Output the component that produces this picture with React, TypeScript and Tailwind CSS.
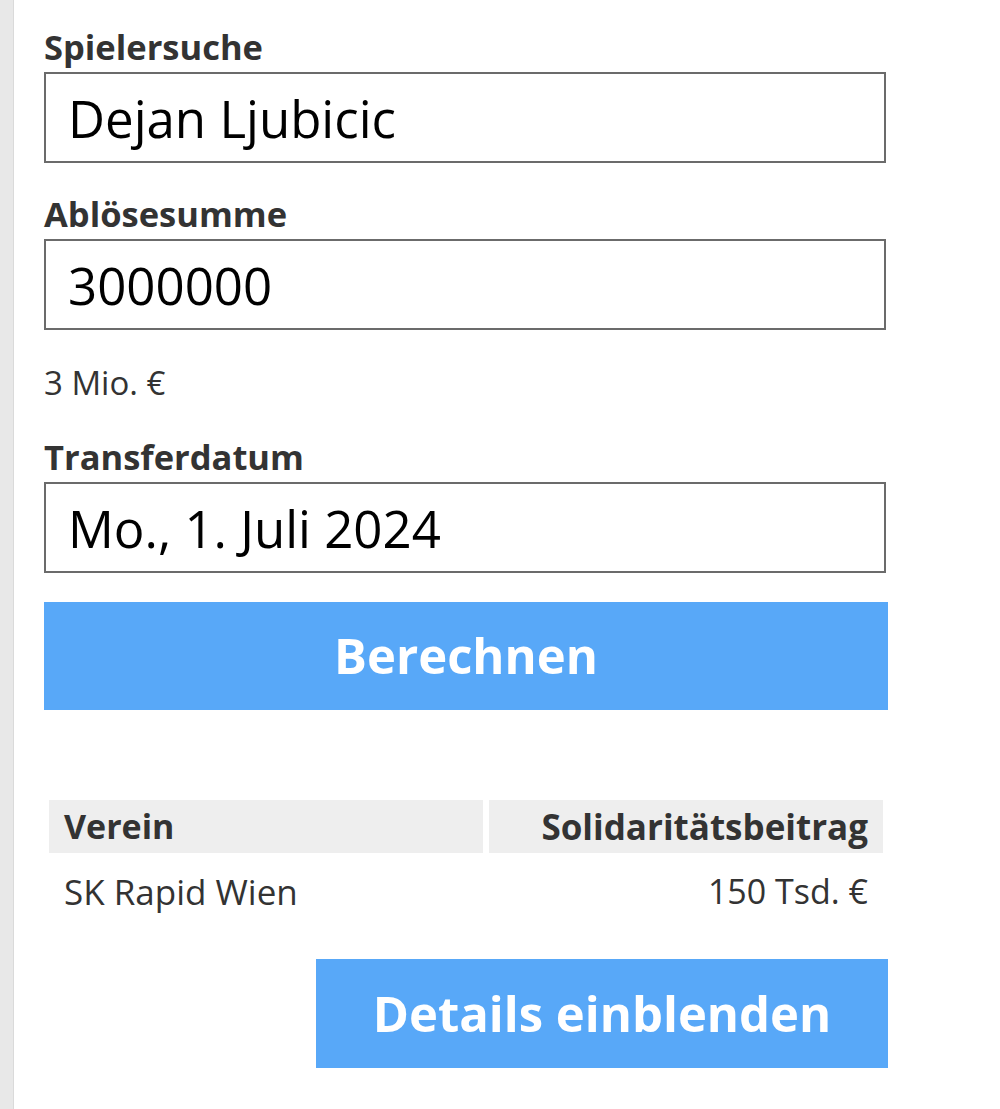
import { useState } from 'react';

const fieldClass =
    "block w-[842px] h-[91px] border-2 border-[#6b6b6b] bg-white pl-[22px] text-[51px] text-black outline-none font-['Open_Sans',sans-serif]";

const labelClass = 'block text-[34.5px] leading-[40px] font-bold text-[#333333] mb-[5px]';

export default function App() {
    const [player, setPlayer] = useState('Dejan Ljubicic');
    const [fee, setFee] = useState('3000000');
    const [date, setDate] = useState('Mo., 1. Juli 2024');

    return (
        <div className="flex min-h-[1109px] w-[1000px] bg-white font-['Open_Sans',sans-serif]">
            <div className="w-[14px] shrink-0 bg-[#e8e8e8] border-r border-[#dadada]" />

            <div className="flex flex-col pl-[30px] pt-[27px]">
                <label className={labelClass}>Spielersuche</label>
                <input className={fieldClass} value={player} onChange={(e) => setPlayer(e.target.value)} />

                <label className={labelClass + ' mt-[31px]'}>Ablösesumme</label>
                <input className={fieldClass} value={fee} onChange={(e) => setFee(e.target.value)} />
                <p className="mt-[33px] text-[33px] leading-[40px] text-[#333333]">3 Mio. €</p>

                <label className={labelClass + ' mt-[34px]'}>Transferdatum</label>
                <input className={fieldClass} value={date} onChange={(e) => setDate(e.target.value)} />

                <button
                    type="button"
                    className="mt-[29px] h-[108px] w-[844px] bg-[#58a8f8] text-[49px] font-bold text-white"
                >
                    Berechnen
                </button>

                <div className="mt-[90px] grid w-[844px] grid-cols-[434px_394px] gap-x-[6px] px-[5px] text-[#333333]">
                    <div className="h-[53px] bg-[#eeeeee] px-[15px] text-[34px] leading-[53px] font-bold">Verein</div>
                    <div className="h-[53px] bg-[#eeeeee] px-[15px] text-right text-[35px] leading-[53px] font-bold">
                        Solidaritätsbeitrag
                    </div>
                    <div className="pt-[12px] px-[15px] text-[35px] leading-[53px]">SK Rapid Wien</div>
                    <div className="pt-[12px] px-[15px] text-right text-[34px] leading-[53px]">150 Tsd. €</div>
                </div>

                <div className="mt-[41px] flex w-[844px] justify-end">
                    <button
                        type="button"
                        className="h-[109px] w-[572px] bg-[#58a8f8] text-[49px] font-bold text-white"
                    >
                        Details einblenden
                    </button>
                </div>
            </div>
        </div>
    );
}
